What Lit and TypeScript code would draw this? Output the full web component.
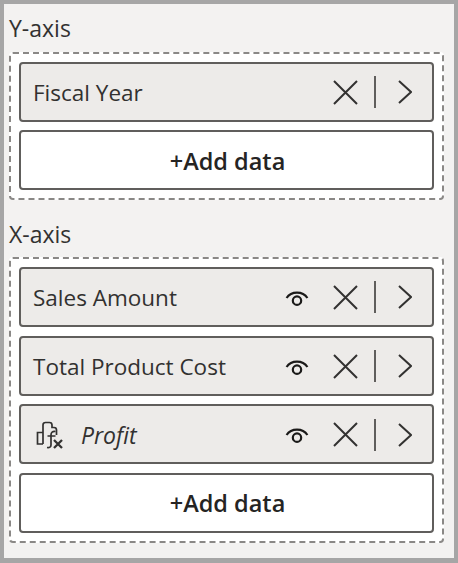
import { LitElement, html, css, svg } from 'lit';
import { customElement, property } from 'lit/decorators.js';

const eye = svg`<path d="M1.5 8.5C6 1.5 17 1.5 21.5 8.5" /><circle cx="11.5" cy="11" r="4" />`;

@customElement('field-well')
export class FieldWell extends LitElement {
  static styles = css`
    :host {
      display: flex;
      align-items: center;
      height: 60px;
      box-sizing: border-box;
      border: 2px solid #605e5c;
      border-radius: 4px;
      background: #edebe9;
      padding: 1px 20px 0 12px;
      font-size: 22.5px;
      color: #323130;
    }
    .name {
      flex: 1;
    }
    .measure {
      font-style: italic;
      margin-left: 17px;
      font-size: 23px;
    }
    svg {
      display: block;
      fill: none;
      stroke: #323130;
      flex: none;
    }
    .eye {
      stroke: #1b1a19;
      stroke-width: 2.1;
      margin-right: 24px;
    }
    .sep {
      width: 2px;
      height: 32px;
      background: #605e5c;
      margin: 0 22px 0 16px;
      flex: none;
    }
    .calc {
      stroke-width: 1.7;
      margin-left: 3px;
    }
  `;

  @property() name = '';
  @property({ type: Boolean }) showEye = false;
  @property({ type: Boolean }) measure = false;

  render() {
    return html`
      ${this.measure
        ? html`<svg class="calc" width="28" height="28" viewBox="0 0 28 28">
              <path d="M7 23H1.500V11.500H7M7 23V4Q7 1.500 9.500 1.500H13.500Q16 1.500 16 4V6.500H18Q20.500 6.500 20.500 9V14" />
              <path d="M19.500 10.500Q15 10 15 14V24Q15 27 11 26.500M11.500 15H19.500" />
              <path stroke-width="2.300" d="M18 19L26 27M26 19L18 27" />
            </svg>
            <span class="name measure">${this.name}</span>`
        : html`<span class="name">${this.name}</span>`}
      ${this.showEye
        ? html`<svg class="eye" width="24" height="17" viewBox="0 0 23 16">${eye}</svg>`
        : ''}
      <svg width="25" height="25" viewBox="0 0 25 25" stroke-width="2">
        <path d="M1 1L24 24M24 1L1 24" />
      </svg>
      <div class="sep"></div>
      <svg width="14" height="24" viewBox="0 0 14 24" stroke-width="2">
        <path d="M1 1L13 12L1 23" />
      </svg>
    `;
  }
}

@customElement('app-root')
export class AppRoot extends LitElement {
  static styles = css`
    :host {
      display: block;
      width: 458px;
      height: 563px;
      box-sizing: border-box;
      border: 4px solid #a6a6a6;
      border-bottom-width: 5px;
      background: #f3f2f1;
      padding: 0 10px 0 5px;
      font-family: 'Open Sans', 'Noto Sans', sans-serif;
      color: #323130;
    }
    .label {
      height: 47.6px;
      display: flex;
      align-items: flex-end;
      padding-bottom: 8px;
      box-sizing: border-box;
      font-size: 23px;
    }
    .label.next {
      height: 56.7px;
      padding-bottom: 7px;
    }
    .well {
      display: flex;
      flex-direction: column;
      gap: 8.67px;
      background: #fff;
      border: 2px dashed #8a8886;
      border-radius: 4px;
      padding: 8px;
    }
    .add {
      height: 60px;
      box-sizing: border-box;
      border: 2px solid #605e5c;
      border-radius: 4px;
      background: #fff;
      display: flex;
      align-items: center;
      justify-content: center;
      padding: 1px 0 0 2px;
      font-size: 23.5px;
      font-weight: 600;
      color: #252423;
    }
  `;

  render() {
    return html`
      <div class="label">Y-axis</div>
      <div class="well">
        <field-well name="Fiscal Year"></field-well>
        <div class="add">+Add data</div>
      </div>
      <div class="label next">X-axis</div>
      <div class="well">
        <field-well name="Sales Amount" showEye></field-well>
        <field-well name="Total Product Cost" showEye></field-well>
        <field-well name="Profit" showEye measure></field-well>
        <div class="add">+Add data</div>
      </div>
    `;
  }
}
